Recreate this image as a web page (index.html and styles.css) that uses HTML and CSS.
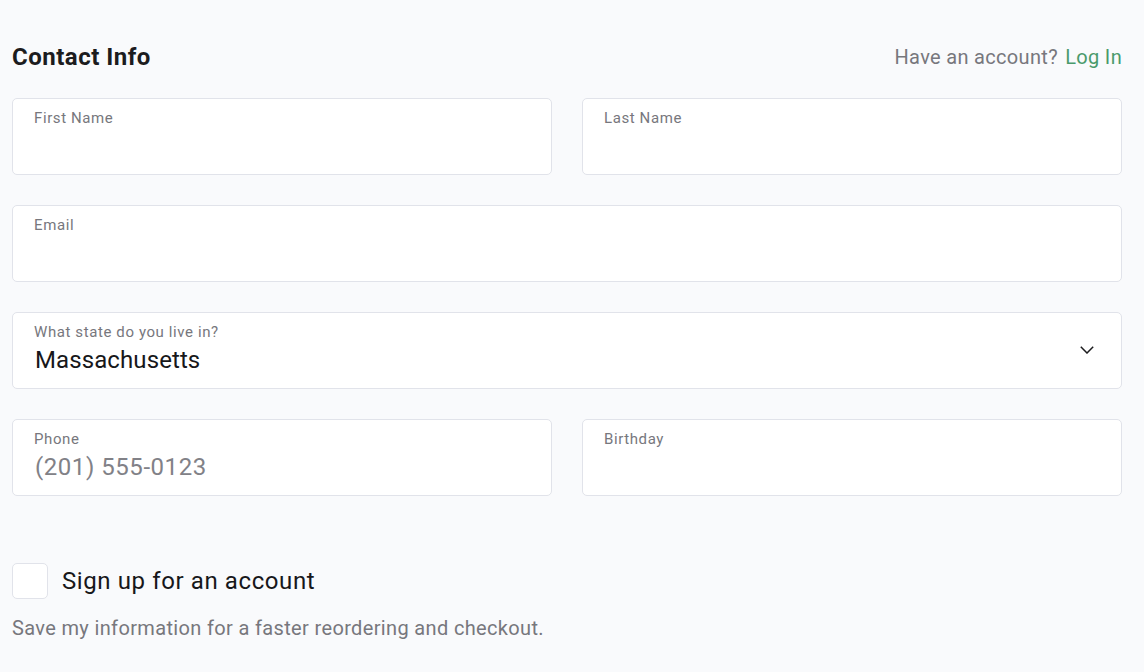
FILE: index.html
```html
<!DOCTYPE html>
<html>
<head>
<meta charset="utf-8">
<link rel="stylesheet" href="styles.css">
</head>
<body>
<div class="page">
  <div class="header">
    <h2 class="title">Contact Info</h2>
    <div class="account">Have an account? <a class="login" href="#">Log In</a></div>
  </div>
  <div class="form">
    <div class="row two">
      <div class="field"><div class="label">First Name</div><div class="value"></div></div>
      <div class="field"><div class="label">Last Name</div><div class="value"></div></div>
    </div>
    <div class="row">
      <div class="field"><div class="label">Email</div><div class="value"></div></div>
    </div>
    <div class="row">
      <div class="field select">
        <div class="select-body">
          <div class="label">What state do you live in?</div>
          <div class="value state">Massachusetts</div>
        </div>
        <svg class="chevron" width="14" height="8" viewBox="0 0 14 8"><path d="M0.8 0.8 L7 7 L13.2 0.8" fill="none" stroke="#1c1c1e" stroke-width="1.5"/></svg>
      </div>
    </div>
    <div class="row two">
      <div class="field"><div class="label">Phone</div><div class="value placeholder">(201) 555-0123</div></div>
      <div class="field"><div class="label">Birthday</div><div class="value"></div></div>
    </div>
  </div>
  <div class="signup">
    <div class="checkbox"></div>
    <div class="signup-text">Sign up for an account</div>
  </div>
  <p class="note">Save my information for a faster reordering and checkout.</p>
</div>
</body>
</html>
```
FILE: styles.css
```css
html, body {
  margin: 0;
  padding: 0;
  background: #f9fafc;
  font-family: Roboto, "Liberation Sans", sans-serif;
}
.page {
  width: 1110px;
  padding: 42px 0 0 12px;
}
.header {
  display: flex;
  justify-content: space-between;
  align-items: center;
  height: 30px;
  margin-bottom: 26px;
}
.title {
  margin: 0;
  font-size: 24px;
  font-weight: 700;
  color: #1c1c1e;
  letter-spacing: 0.5px;
}
.account {
  font-size: 20px;
  color: #77777d;
  letter-spacing: 0.32px;
}
.login {
  color: #4a9a6c;
  text-decoration: none;
  margin-left: 2px;
}
.form {
  display: flex;
  flex-direction: column;
  gap: 30px;
}
.row {
  display: grid;
  grid-template-columns: 1fr;
}
.row.two {
  grid-template-columns: 1fr 1fr;
  column-gap: 30px;
}
.field {
  box-sizing: border-box;
  height: 77px;
  background: #fff;
  border: 1px solid #e1e3ea;
  border-radius: 5px;
  padding: 10px 22px 0 21px;
}
.label {
  font-size: 15px;
  line-height: 18px;
  color: #77777d;
  letter-spacing: 0.6px;
}
.value {
  font-size: 24px;
  line-height: 30px;
  color: #17171a;
  margin-top: 4px;
  letter-spacing: 0.55px;
  padding-left: 1px;
}
.value.state {
  letter-spacing: 0.1px;
}
.value.placeholder {
  color: #818187;
}
.select {
  display: flex;
  align-items: flex-start;
  justify-content: space-between;
}
.chevron {
  margin-top: 23px;
  margin-right: 5px;
}
.signup {
  display: flex;
  align-items: center;
  gap: 14px;
  margin-top: 67px;
}
.checkbox {
  box-sizing: border-box;
  width: 36px;
  height: 36px;
  background: #fff;
  border: 1px solid #e1e3ea;
  border-radius: 5px;
}
.signup-text {
  font-size: 24px;
  color: #17171a;
  letter-spacing: 0.6px;
}
.note {
  margin: 17px 0 0;
  font-size: 20px;
  color: #77777d;
  letter-spacing: 0.35px;
}
```
